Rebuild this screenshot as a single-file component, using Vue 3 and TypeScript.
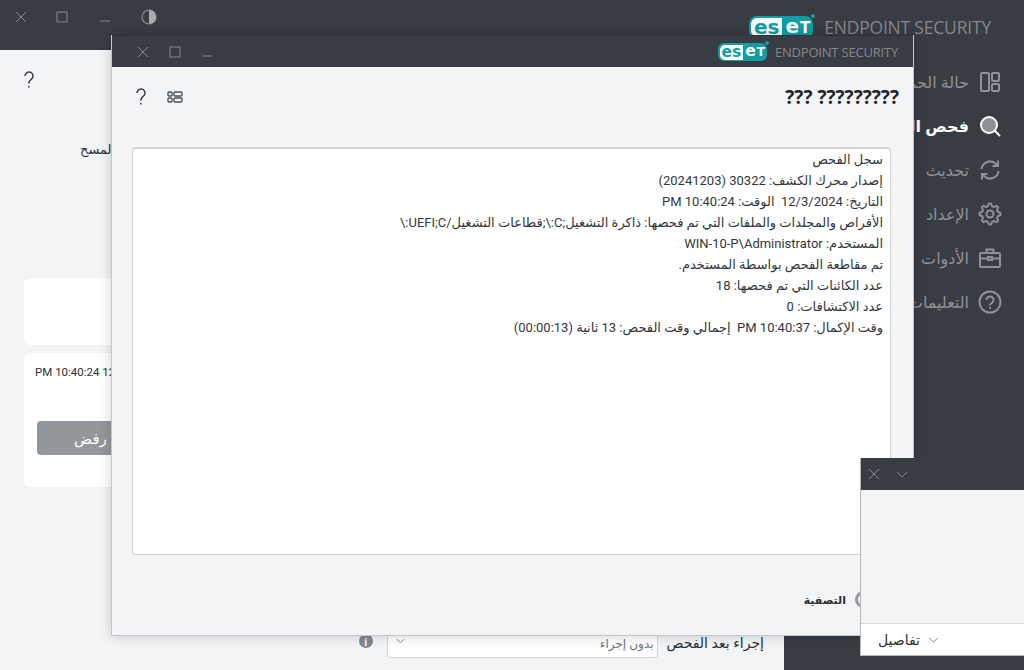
<template>
  <div class="desktop" dir="rtl">
    <!-- main window -->
    <div class="main-window">
      <header class="main-title" dir="ltr">
        <div class="win-controls">
          <svg class="ctl" viewBox="0 0 12 12"><path d="M1 1l10 10M11 1L1 11" /></svg>
          <svg class="ctl ctl-gap" viewBox="0 0 12 12"><rect x="1" y="1" width="10" height="10" /></svg>
          <svg class="ctl ctl-gap-min" viewBox="0 0 12 12"><path d="M1 10h10" /></svg>
          <svg class="contrast" viewBox="0 0 16 16">
            <circle cx="8" cy="8" r="7" fill="none" stroke="#8f9296" stroke-width="1.2" />
            <path d="M8 1a7 7 0 0 1 0 14z" fill="#a9abae" />
          </svg>
        </div>
        <div class="brand">
          <span class="logo"><span class="logo-es">es</span><span class="logo-et">e<span class="logo-t">T</span></span></span>
          <span class="brand-name">ENDPOINT SECURITY</span>
        </div>
      </header>
      <div class="main-body">
        <aside class="sidebar">
          <div
            v-for="item in navItems"
            :key="item.label"
            class="nav-item"
            :class="{ active: item.active }"
          >
            <svg class="nav-icon" viewBox="0 0 24 24" v-html="item.icon"></svg>
            <span class="nav-label">{{ item.label }}</span>
          </div>
        </aside>
        <main class="content">
          <div class="content-top" dir="ltr">
            <svg class="help" viewBox="0 0 10 17"><path d="M1 5a4 4 0 1 1 6.2 3.3C5.6 9.4 4.8 10.3 4.8 12.500M4.8 15v1.500" /></svg>
          </div>
          <div class="scan-label" dir="ltr"><span dir="rtl">المسح</span></div>
          <div class="card card-empty"></div>
          <div class="card card-scan" dir="ltr">
            <div class="scan-time">PM 10:40:24 12/3/2024</div>
            <div class="reject">رفض</div>
          </div>
          <div class="after-scan">
            <span class="after-label">إجراء بعد الفحص</span>
            <div class="select">
              <span class="select-value">بدون إجراء</span>
              <svg class="chev" viewBox="0 0 10 6"><path d="M1 1l4 4 4-4" /></svg>
            </div>
            <span class="info">i</span>
          </div>
        </main>
      </div>
    </div>

    <!-- log window -->
    <section class="dialog">
      <header class="dialog-title" dir="ltr">
        <div class="win-controls">
          <svg class="ctl" viewBox="0 0 12 12"><path d="M1 1l10 10M11 1L1 11" /></svg>
          <svg class="ctl ctl-gap2" viewBox="0 0 12 12"><rect x="1" y="1" width="10" height="10" /></svg>
          <svg class="ctl ctl-gap2" viewBox="0 0 12 12"><path d="M1 10h10" /></svg>
        </div>
        <div class="brand brand-small">
          <span class="logo"><span class="logo-es">es</span><span class="logo-et">e<span class="logo-t">T</span></span></span>
          <span class="brand-name">ENDPOINT SECURITY</span>
        </div>
      </header>
      <div class="dialog-body">
        <div class="dialog-head">
          <h1>????????? ???</h1>
          <div class="dialog-tools" dir="ltr">
            <svg class="help" viewBox="0 0 10 17"><path d="M1 5a4 4 0 1 1 6.2 3.3C5.6 9.4 4.8 10.3 4.8 12.500M4.8 15v1.500" /></svg>
            <svg class="list-icon" viewBox="0 0 16 12">
              <rect x="1" y="1" width="4" height="4" rx="1" />
              <rect x="1" y="7" width="4" height="4" rx="1" />
              <rect x="7" y="1" width="8" height="4" rx="1" />
              <rect x="7" y="7" width="8" height="4" rx="1" />
            </svg>
          </div>
        </div>
        <div class="log">
          <div v-for="line in logLines" :key="line" class="log-line">{{ line }}</div>
        </div>
        <div class="filter-row">
          <span class="toggle"></span>
          <span class="filter-label">التصفية</span>
        </div>
      </div>
    </section>

    <!-- toast -->
    <section class="toast">
      <header class="toast-title" dir="ltr">
        <svg class="ctl" viewBox="0 0 12 12"><path d="M1 1l10 10M11 1L1 11" /></svg>
        <svg class="chev-title" viewBox="0 0 12 7"><path d="M1 1l5 5 5-5" /></svg>
      </header>
      <div class="toast-body"></div>
      <footer class="toast-foot" dir="ltr">
        <span class="details">تفاصيل</span>
        <svg class="chev-foot" viewBox="0 0 12 7"><path d="M1 1l5 5 5-5" /></svg>
      </footer>
    </section>
  </div>
</template>

<script setup lang="ts">
interface NavItem {
  label: string;
  icon: string;
  active?: boolean;
}

// outline of the settings cog, alternating outer and inner radius
function gearPath(teeth: number): string {
  const pts: string[] = [];
  for (let i = 0; i < teeth * 4; i++) {
    const r = i % 4 < 2 ? 10.5 : 8;
    const a = ((i - 0.5) / (teeth * 4)) * Math.PI * 2;
    pts.push(`${(12 + r * Math.cos(a)).toFixed(2)} ${(12 + r * Math.sin(a)).toFixed(2)}`);
  }
  return "M" + pts.join("L") + "z";
}

const navItems: NavItem[] = [
  {
    label: "حالة الحماية",
    icon: '<rect x="3" y="3" width="8" height="18" rx="1"/><rect x="14" y="3" width="7" height="8" rx="1"/><rect x="14" y="14" width="7" height="7" rx="1"/>',
  },
  {
    label: "فحص الكمبيوتر",
    active: true,
    icon: '<circle cx="11" cy="11" r="8" fill="#8e9196"/><path d="M17 17L22 22"/>',
  },
  {
    label: "تحديث",
    icon: '<path d="M3.5 11a8.5 8.5 0 0 1 14.5-5l2 2M20.5 13a8.5 8.5 0 0 1-14.5 5l-2-2"/><path d="M20 2.5V8h-5.5M4 21.5V16h5.5"/>',
  },
  {
    label: "الإعداد",
    icon: `<path d="${gearPath(8)}" stroke-linejoin="round"/><circle cx="12" cy="12" r="3.5"/>`,
  },
  {
    label: "الأدوات",
    icon: '<rect x="2" y="7" width="20" height="14" rx="1"/><path d="M8.5 7V3.5h7V7M2 12.5h8M14 12.5h8M10 11h4v3h-4z"/>',
  },
  {
    label: "التعليمات والدعم",
    icon: '<circle cx="12" cy="12" r="10.5"/><path d="M8.5 10a3.5 3.5 0 1 1 5.3 3c-1.2.7-1.8 1.3-1.8 2.5M12 17v1.800"/>',
  },
];

const logLines: string[] = [
  "سجل الفحص",
  "إصدار محرك الكشف: 30322 (20241203)",
  "التاريخ: 12/3/2024  الوقت: 10:40:24 PM",
  "الأقراص والمجلدات والملفات التي تم فحصها: ذاكرة التشغيل;C:\\;قطاعات التشغيل/UEFI;C:\\",
  "المستخدم: WIN-10-P\\Administrator",
  "تم مقاطعة الفحص بواسطة المستخدم.",
  "عدد الكائنات التي تم فحصها: 18",
  "عدد الاكتشافات: 0",
  "وقت الإكمال: 10:40:37 PM  إجمالي وقت الفحص: 13 ثانية (00:00:13)",
];
</script>

<style>
html,
body {
  margin: 0;
  overflow: hidden;
}
</style>

<style scoped>
.desktop {
  position: relative;
  width: 1024px;
  height: 670px;
  overflow: hidden;
  background: #383c43;
  font-family: "Open Sans", "DejaVu Sans", sans-serif;
  color: #2b2f36;
}

/* main window */
.main-window {
  display: flex;
  flex-direction: column;
  height: 100%;
}

.main-title {
  display: flex;
  justify-content: space-between;
  align-items: flex-start;
  height: 50px;
  flex-shrink: 0;
  background: #383c43;
  padding: 0 33px 0 15px;
}

.win-controls {
  display: flex;
  align-items: center;
  height: 34px;
}

.ctl {
  width: 12px;
  height: 12px;
  fill: none;
  stroke: #85888c;
  stroke-width: 1;
}

.ctl-gap {
  margin-left: 29px;
}

.ctl-gap-min {
  margin-left: 31px;
}

.contrast {
  width: 16px;
  height: 16px;
  margin-left: 30px;
}

.brand {
  display: flex;
  align-items: center;
  gap: 11px;
  margin-top: 15px;
}

.logo {
  position: relative;
  display: inline-flex;
  align-items: center;
  height: 23px;
  padding: 0 3px 0 2px;
  border-radius: 8px;
  background: #0e9ea3;
  font-family: "DejaVu Sans", sans-serif;
  font-weight: 700;
  font-size: 20px;
  line-height: 19px;
  color: #fff;
}

.logo::after {
  content: "";
  position: absolute;
  right: -2px;
  top: -2px;
  width: 4px;
  height: 4px;
  border-radius: 50%;
  background: #0e9ea3;
}

.logo-es {
  height: 19px;
  padding: 0 3px;
  border-radius: 6px 0 0 6px;
  background: #fff;
  color: #0e9ea3;
}

.logo-et {
  padding: 0 0 0 3px;
}

.logo-t {
  font-size: 15px;
  margin-left: 1px;
}

.brand-name {
  font-size: 17.5px;
  line-height: 24px;
  color: #84878b;
  letter-spacing: -0.2px;
}

.main-body {
  display: flex;
  flex: 1;
}

.sidebar {
  width: 240px;
  flex-shrink: 0;
  padding: 10px 22px 0 0;
  box-sizing: border-box;
  background: #383c43;
}

.nav-item {
  display: flex;
  align-items: center;
  gap: 9px;
  height: 44px;
  font-size: 16px;
  color: #8e9196;
  white-space: nowrap;
}

.nav-item.active {
  color: #fff;
  font-weight: 600;
}

.nav-icon {
  width: 24px;
  height: 24px;
  fill: none;
  stroke: #8e9196;
  stroke-width: 2;
  flex-shrink: 0;
}

.active .nav-icon {
  stroke: #fff;
}

.content {
  flex: 1;
  background: #f3f4f6;
  padding: 0 24px;
}

.content-top {
  display: flex;
  padding-top: 21px;
  height: 58px;
  box-sizing: border-box;
}

.help {
  width: 10px;
  height: 17px;
  fill: none;
  stroke: #383c43;
  stroke-width: 1.5;
}

.scan-label {
  height: 138px;
  margin-top: 32px;
  padding-left: 56px;
  font-size: 13px;
  line-height: 18px;
}

.card {
  background: #fff;
  border-radius: 6px;
  width: 736px;
  box-sizing: border-box;
}

.card-empty {
  height: 67px;
  margin-bottom: 8px;
}

.card-scan {
  height: 134px;
  padding: 11px;
}

.scan-time {
  font-family: Roboto, sans-serif;
  font-size: 11.5px;
  line-height: 16px;
  color: #2b2f36;
  white-space: nowrap;
}

.reject {
  width: 200px;
  height: 34px;
  margin: 41px 0 0 2px;
  border-radius: 4px;
  background: #92979c;
  color: #fff;
  font-size: 15px;
  line-height: 34px;
  padding-left: 37px;
  box-sizing: border-box;
}

.after-scan {
  display: flex;
  align-items: center;
  margin: 145px -4px 0 0;
  font-size: 14px;
}

.after-label {
  margin: -6px 0 0 9px;
  color: #2b2f36;
}

.select {
  display: flex;
  justify-content: space-between;
  align-items: center;
  box-sizing: border-box;
  width: 271px;
  height: 26px;
  padding: 0 3px 0 8px;
  background: #fff;
  border: 1px solid #cfd1d4;
  border-radius: 4px;
  color: #6e7278;
  font-size: 12px;
}

.select-value {
  margin-top: -4px;
}

.chev {
  width: 9px;
  height: 6px;
  margin-top: -8px;
  fill: none;
  stroke: #6e7278;
}

.info {
  display: inline-flex;
  align-items: center;
  justify-content: center;
  width: 14px;
  height: 14px;
  margin: -8px 14px 0 0;
  border-radius: 50%;
  background: #85888c;
  color: #f3f4f6;
  font-size: 11px;
  font-weight: 700;
}

/* log window */
.dialog {
  position: absolute;
  left: 111px;
  top: 35px;
  width: 803px;
  height: 601px;
  display: flex;
  flex-direction: column;
  box-sizing: border-box;
  border: 1px solid #c4c6c9;
  border-top: 0;
  box-shadow: 0 0 12px rgba(0, 0, 0, 0.18);
  background: #f3f4f6;
}

.dialog-title {
  display: flex;
  justify-content: space-between;
  align-items: flex-start;
  height: 32px;
  flex-shrink: 0;
  padding: 0 15px 0 25px;
  background: #383c43;
  border-top: 1px solid #2f3238;
  box-sizing: border-box;
}

.dialog-title .win-controls {
  height: 31px;
}

.ctl-gap2 {
  margin-left: 20px;
}

.brand-small {
  gap: 8px;
  margin-top: 7px;
}

.brand-small .logo {
  height: 18px;
  font-size: 15.5px;
  line-height: 15px;
  padding: 0 2px;
  border-radius: 6px;
}

.brand-small .logo-es {
  height: 15px;
  padding: 0 2px;
  border-radius: 5px 0 0 5px;
}

.brand-small .logo-et {
  padding-left: 2px;
}

.brand-small .logo-t {
  font-size: 12px;
}

.brand-small .brand-name {
  font-size: 13px;
  line-height: 18px;
}

.dialog-body {
  display: flex;
  flex-direction: column;
  flex: 1;
  padding: 0 14px 0 20px;
}

.dialog-head {
  display: flex;
  justify-content: space-between;
  align-items: center;
  height: 80px;
  padding-bottom: 21px;
  box-sizing: border-box;
}

.dialog-head h1 {
  margin: 0;
  font-size: 19px;
  font-weight: 700;
  color: #23262b;
}

.dialog-tools {
  display: flex;
  align-items: center;
  gap: 21px;
  padding-left: 4px;
}

.list-icon {
  width: 16px;
  height: 12px;
  fill: none;
  stroke: #4a4e55;
  stroke-width: 1.4;
}

.log {
  flex-shrink: 0;
  width: 759px;
  height: 408px;
  margin-right: 8px;
  box-sizing: border-box;
  padding: 0 7px 0 0;
  background: #fff;
  border: 1px solid #d2d3d5;
  border-top: 2px solid #d2d3d5;
  border-radius: 4px;
  overflow: hidden;
}

.log-line {
  font-family: Roboto, "DejaVu Sans", sans-serif;
  font-size: 13px;
  line-height: 21px;
  height: 21px;
  color: #33373d;
  white-space: pre;
}

.filter-row {
  display: flex;
  align-items: center;
  gap: 9px;
  margin-top: 36px;
  padding-right: 27px;
}

.toggle {
  width: 17px;
  height: 17px;
  box-sizing: border-box;
  border: 3px solid #96999d;
  border-radius: 50%;
}

.filter-label {
  font-size: 11px;
  font-weight: 700;
  color: #2b2f36;
}

/* toast */
.toast {
  position: absolute;
  left: 860px;
  top: 458px;
  width: 164px;
  height: 198px;
  display: flex;
  flex-direction: column;
  box-sizing: border-box;
  border-left: 1px solid #b6b8ba;
  border-bottom: 1px solid #b6b8ba;
  background: #f3f4f6;
}

.toast-title {
  display: flex;
  align-items: center;
  height: 32px;
  flex-shrink: 0;
  padding-left: 7px;
  background: #383c43;
}

.chev-title {
  width: 12px;
  height: 7px;
  margin-left: 16px;
  fill: none;
  stroke: #85888c;
}

.toast-body {
  flex: 1;
}

.toast-foot {
  display: flex;
  align-items: center;
  gap: 8px;
  height: 32px;
  flex-shrink: 0;
  padding-left: 17px;
  box-sizing: border-box;
  background: #fff;
  border-top: 1px solid #d8d9db;
}

.details {
  font-size: 14px;
  color: #2b2f36;
}

.chev-foot {
  width: 11px;
  height: 6px;
  fill: none;
  stroke: #6e7278;
}
</style>
